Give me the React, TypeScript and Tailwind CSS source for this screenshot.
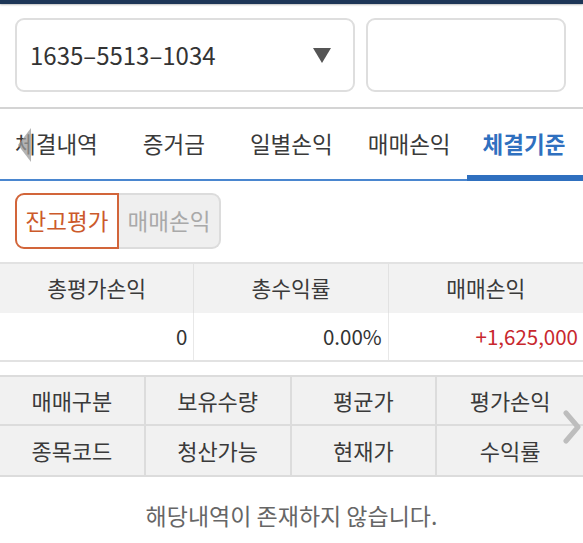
import React from 'react';

const font = { fontFamily: '"Noto Sans CJK KR", "Noto Sans", sans-serif' };

const tabs = ['체결내역', '증거금', '일별손익', '매매손익', '체결기준'];
const tabGap = ['mr-[45px]', 'mr-[45px]', 'mr-[35px]', 'mr-[32px]', ''];
const summaryHead = ['총평가손익', '총수익률', '매매손익'];
const gridRows = [
  ['매매구분', '보유수량', '평균가', '평가손익'],
  ['종목코드', '청산가능', '현재가', '수익률'],
];

export default function App() {
  return (
    <div className="w-[583px] h-[543px] bg-white overflow-hidden relative" style={font}>
      {/* top bar */}
      <div className="h-[4px] bg-[#1d3657] shadow-[0_1px_2px_rgba(0,0,0,0.25)]" />

      {/* account select */}
      <div className="flex gap-[11px] px-[15px] pt-[14px] pb-[15px] border-b-2 border-[#d4d4d4]">
        <div className="w-[340px] h-[74px] rounded-[9px] border-2 border-[#dedede] flex items-center justify-between pl-[13px] pr-[22px]">
          <span className="text-[24px] text-[#333]">1635–5513–1034</span>
          <svg width="18" height="15" viewBox="0 0 18 15">
            <polygon points="0,0 18,0 9,15" fill="#555" />
          </svg>
        </div>
        <div className="w-[200px] h-[74px] rounded-[9px] border-2 border-[#dedede]" />
      </div>

      {/* tabs */}
      <div className="relative flex items-center h-[72px] pl-[15px] border-b-2 border-[#4a86cf]">
        {tabs.map((t, i) => (
          <div
            key={t}
            className={`relative h-full flex items-center text-[22.5px] whitespace-nowrap ${tabGap[i]} ${
              i === 4 ? 'text-[#2f70bf] font-bold' : 'text-[#3a3a3a]'
            }`}
          >
            {t}
            {i === 4 && (
              <div className="absolute left-[-16px] right-[-20px] bottom-[-2px] h-[6px] bg-[#2f70bf]" />
            )}
          </div>
        ))}
        <svg className="absolute left-[18px] top-[19px]" width="13" height="34" viewBox="0 0 13 34">
          <polygon points="13,0 13,34 0,17" fill="#9a9a9a" fillOpacity="0.75" />
        </svg>
      </div>

      {/* segment buttons */}
      <div className="px-[15px] pt-[12px] pb-[13px]">
        <div className="flex w-[206px] h-[56px] text-[22.5px]">
          <div className="flex-1 flex items-center justify-center rounded-l-[9px] border-2 border-[#d2653a] text-[#cc5a2b] bg-white">
            잔고평가
          </div>
          <div className="flex-1 flex items-center justify-center rounded-r-[9px] border-2 border-l-0 border-[#dcdcdc] text-[#a9a9a9] bg-[#efefef]">
            매매손익
          </div>
        </div>
      </div>

      {/* summary table */}
      <div className="border-t-2 border-b-2 border-[#e2e2e2]">
        <div className="grid grid-cols-3 h-[49px] bg-[#f2f2f2] text-[21.5px] text-[#3a3a3a]">
          {summaryHead.map((h, i) => (
            <div key={h} className={`flex items-center justify-center ${i < 2 ? 'border-r border-[#e2e2e2]' : ''}`}>
              {h}
            </div>
          ))}
        </div>
        <div className="grid grid-cols-3 h-[47px] text-[20.5px] text-[#333]">
          <div className="flex items-center justify-end pr-[6px] border-r border-[#e8e8e8]">0</div>
          <div className="flex items-center justify-end pr-[6px] border-r border-[#e8e8e8]">0.00%</div>
          <div className="flex items-center justify-end pr-[5px] text-[#c8282e]">+1,625,000</div>
        </div>
      </div>

      {/* position grid */}
      <div className="relative mt-[13px] border-t-2 border-b-2 border-[#dcdcdc] bg-[#f1f1f1]">
        {gridRows.map((row, r) => (
          <div key={r} className={`grid grid-cols-4 h-[49px] text-[22px] text-[#3a3a3a] ${r === 0 ? 'border-b-2 border-[#dcdcdc]' : ''}`}>
            {row.map((c, i) => (
              <div key={c} className={`flex items-center justify-center ${i < 3 ? 'border-r-2 border-[#dcdcdc]' : ''}`}>
                {c}
              </div>
            ))}
          </div>
        ))}
        <svg className="absolute right-[2px] top-[33px]" width="18" height="34" viewBox="0 0 18 34">
          <polyline points="3,3 15,17 3,31" fill="none" stroke="#bdbdbd" strokeWidth="5" strokeLinecap="round" strokeLinejoin="round" />
        </svg>
      </div>

      {/* empty message */}
      <div className="text-center text-[23px] text-[#666] pt-[21px]">해당내역이 존재하지 않습니다.</div>
    </div>
  );
}
